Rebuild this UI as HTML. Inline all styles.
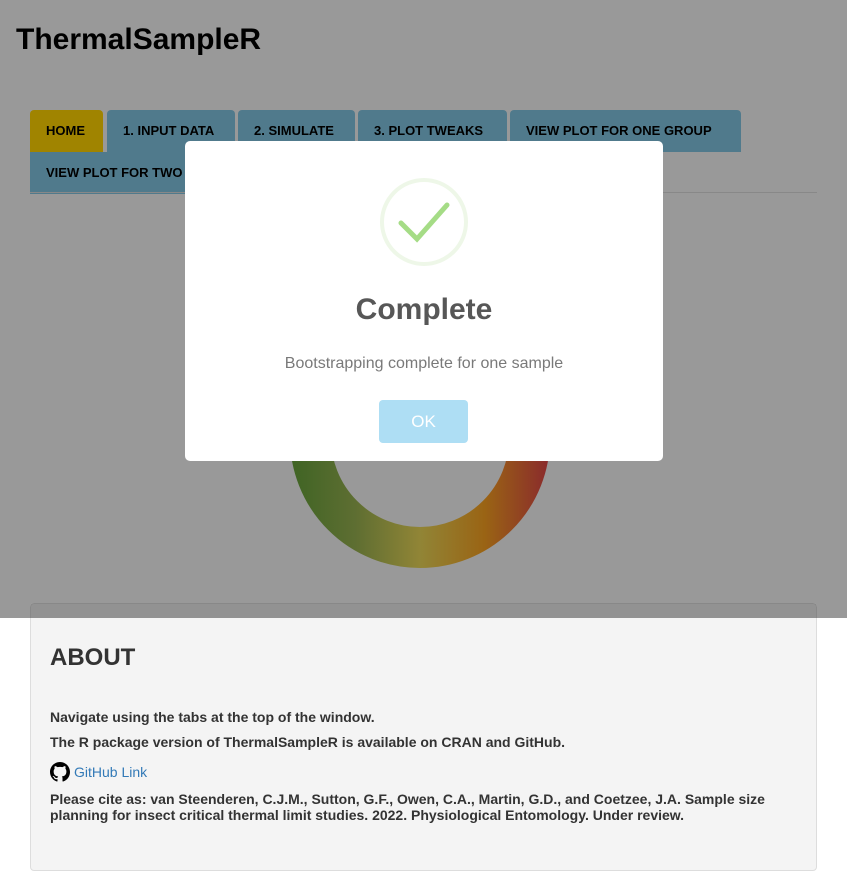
<!DOCTYPE html>
<html><head><meta charset="utf-8"><style>
*{margin:0;padding:0;box-sizing:border-box}
body{width:847px;height:891px;background:#fff;font-family:"Liberation Sans",Arial,sans-serif;position:relative;overflow:hidden}
.top{position:absolute;left:0;top:0;width:847px;height:618px;background:#999}
h1{position:absolute;left:16px;top:23px;font-size:30px;font-weight:bold;color:#000}
.tab{position:absolute;height:42px;background:#507a8c;border-radius:4px 4px 0 0;font-size:13px;font-weight:bold;color:#000;line-height:42px;padding-left:16px;white-space:nowrap;overflow:hidden}
.line{position:absolute;left:30px;top:192px;width:787px;height:1px;background:#888}
.about{position:absolute;left:30px;top:603px;width:787px;height:268px;background:#f4f4f4;border:1px solid #ddd;border-radius:4px;color:#333}
.aboutdark{position:absolute;left:30px;top:603px;width:787px;height:15px;background:#929292;border:1px solid #888;border-bottom:none;border-radius:4px 4px 0 0}
.about h2{position:absolute;left:19px;top:40px;font-size:24px;font-weight:bold}
.about p{position:absolute;left:19px;font-size:14px;font-weight:bold;line-height:16px;width:750px}
.modal{position:absolute;left:185px;top:141px;width:478px;height:320px;background:#fff;border-radius:5px;text-align:center}
</style></head><body>
<div class="top">
<h1>ThermalSampleR</h1>
<div class="tab" style="left:30px;top:110px;width:73px;background:#a08400">HOME</div>
<div class="tab" style="left:107px;top:110px;width:128px">1. INPUT DATA</div>
<div class="tab" style="left:238px;top:110px;width:117px">2. SIMULATE</div>
<div class="tab" style="left:358px;top:110px;width:149px">3. PLOT TWEAKS</div>
<div class="tab" style="left:510px;top:110px;width:231px">VIEW PLOT FOR ONE GROUP</div>
<div class="tab" style="left:30px;top:152px;width:220px;border-radius:0">VIEW PLOT FOR TWO GROUPS</div>
<div class="line"></div>
<svg style="position:absolute;left:0;top:0" width="847" height="618">
<defs><linearGradient id="g" x1="291" y1="0" x2="549" y2="0" gradientUnits="userSpaceOnUse">
<stop offset="0" stop-color="#3f6424"/><stop offset="0.25" stop-color="#5e6e32"/><stop offset="0.5" stop-color="#918536"/><stop offset="0.75" stop-color="#9a6414"/><stop offset="1" stop-color="#8a2a2c"/></linearGradient></defs>
<circle cx="420" cy="438" r="109.5" fill="none" stroke="url(#g)" stroke-width="41"/>
</svg>
</div>
<div class="about">
<h2>ABOUT</h2>
<p style="top:105px">Navigate using the tabs at the top of the window.</p>
<p style="top:130px">The R package version of ThermalSampleR is available on CRAN and GitHub.</p>
<p style="top:158px;font-weight:normal;color:#337ab7;font-size:14px"><svg width="20" height="20" viewBox="0 0 16 16" style="vertical-align:-5px;margin-right:4px"><path fill="#000" d="M8 0C3.58 0 0 3.58 0 8c0 3.54 2.29 6.53 5.47 7.59 .4.07.55-.17.55-.38 0-.19-.01-.82-.01-1.49-2.01.37-2.53-.49-2.69-.94-.09-.23-.48-.94-.82-1.13-.28-.15-.68-.52-.01-.53.63-.01 1.08.58 1.23.82.72 1.21 1.87.87 2.33.66.07-.52.28-.87.51-1.07-1.78-.2-3.64-.89-3.64-3.95 0-.87.31-1.59.82-2.15-.08-.2-.36-1.02.08-2.12 0 0 .67-.21 2.2.82.64-.18 1.32-.27 2-.27.68 0 1.36.09 2 .27 1.53-1.04 2.2-.82 2.2-.82.44 1.1.16 1.92.08 2.12.51.56.82 1.27.82 2.15 0 3.07-1.87 3.75-3.65 3.95.29.25.54.73.54 1.48 0 1.07-.01 1.93-.01 2.2 0 .21.15.46.55.38A8.013 8.013 0 0016 8c0-4.42-3.58-8-8-8z"/></svg>GitHub Link</p>
<p style="top:187px">Please cite as: van Steenderen, C.J.M., Sutton, G.F., Owen, C.A., Martin, G.D., and Coetzee, J.A. Sample size planning for insect critical thermal limit studies. 2022. Physiological Entomology. Under review.</p>
</div>
<div class="aboutdark"></div>
<div class="modal">
<svg style="position:absolute;left:195px;top:37px" width="88" height="88"><circle cx="44" cy="44" r="42" fill="none" stroke="#eef7e8" stroke-width="4"/><path d="M21 45 L37 61 L67 27" fill="none" stroke="#a5dc86" stroke-width="5" stroke-linecap="round"/></svg>
<div style="position:absolute;left:0;width:478px;top:152px;font-size:30px;font-weight:bold;color:#575757">Complete</div>
<div style="position:absolute;left:0;width:478px;top:214px;font-size:16px;color:#797979">Bootstrapping complete for one sample</div>
<div style="position:absolute;left:194px;top:259px;width:89px;height:43px;background:#aedef4;border-radius:4px;color:#fff;font-size:17px;line-height:43px">OK</div>
</div>
</body></html>
